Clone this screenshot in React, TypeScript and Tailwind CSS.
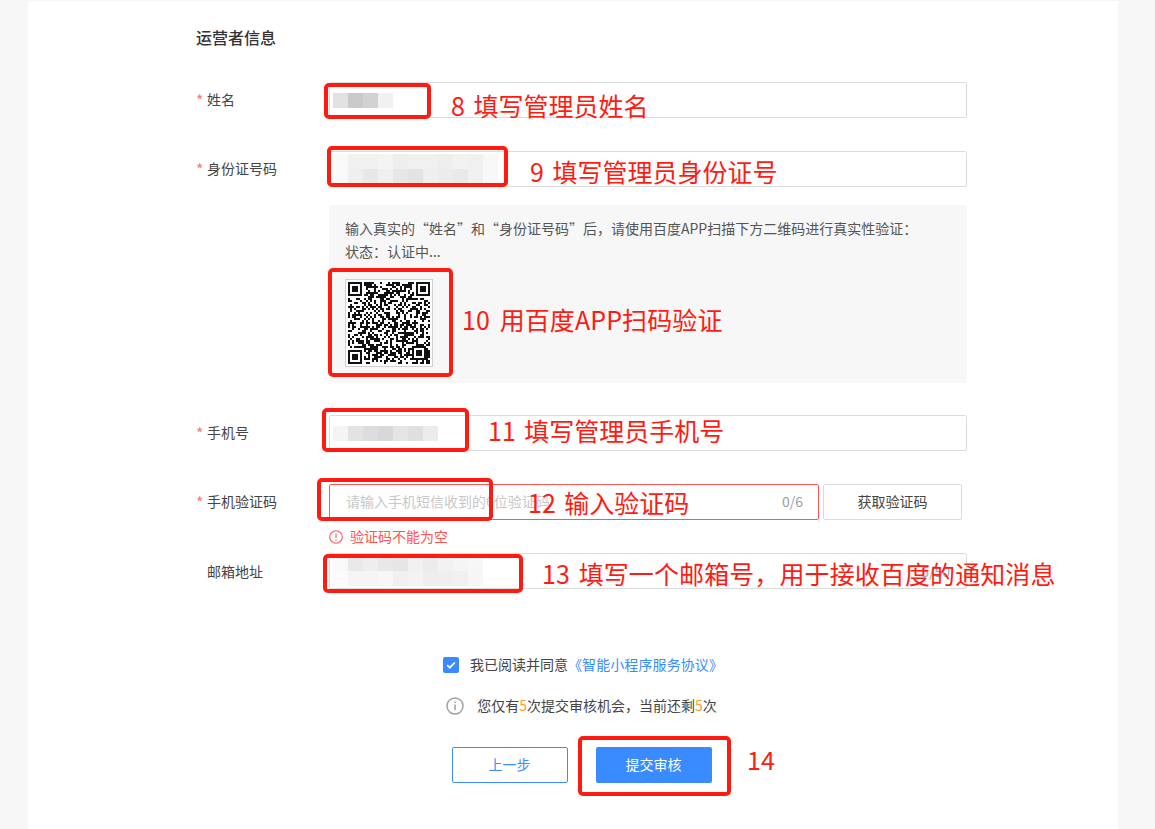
import type { ReactNode } from 'react'

const font = "font-['Noto_Sans_CJK_SC','Noto_Sans',sans-serif]"

// fake qr code, seeded so it stays the same between renders
function buildQr() {
  const size = 41
  const cells: [number, number][] = []
  let seed = 20240611
  const next = () => {
    seed = (seed * 1664525 + 1013904223) >>> 0
    return seed / 4294967296
  }
  const inFinder = (x: number, y: number) =>
    (x < 8 && y < 8) || (x > size - 9 && y < 8) || (x < 8 && y > size - 9)
  const inAlign = (x: number, y: number) => x > 31 && x < 37 && y > 31 && y < 37
  for (let y = 0; y < size; y++) {
    for (let x = 0; x < size; x++) {
      if (inFinder(x, y) || inAlign(x, y)) continue
      if (next() > 0.5) cells.push([x, y])
    }
  }
  return cells
}

const qrCells = buildQr()

function Finder({ x, y }: { x: number; y: number }) {
  return (
    <g>
      <rect x={x} y={y} width={7} height={7} fill="#111" />
      <rect x={x + 1} y={y + 1} width={5} height={5} fill="#fff" />
      <rect x={x + 2} y={y + 2} width={3} height={3} fill="#111" />
    </g>
  )
}

function QrCode() {
  return (
    <div className="w-[88px] h-[88px] border border-[#d0d0d0] bg-white p-[2px]">
      <svg viewBox="0 0 41 41" className="w-full h-full block">
        {qrCells.map(([x, y]) => (
          <rect key={`${x}-${y}`} x={x} y={y} width={1} height={1} fill="#111" />
        ))}
        <Finder x={0} y={0} />
        <Finder x={34} y={0} />
        <Finder x={0} y={34} />
        <Finder x={32} y={32} />
      </svg>
    </div>
  )
}

function Mosaic({ rows }: { rows: string[][] }) {
  return (
    <div className="flex flex-col">
      {rows.map((row, i) => (
        <div key={i} className="flex">
          {row.map((color, j) => (
            <div key={j} className="w-[15px] h-[15px]" style={{ backgroundColor: color }} />
          ))}
        </div>
      ))}
    </div>
  )
}

function Row({ label, required = true, children, className }: { label: string; required?: boolean; children: ReactNode; className?: string }) {
  return (
    <div className={`flex items-center h-9 ${className ?? ''}`}>
      <div className={`w-[133px] flex items-center text-sm text-[#444] shrink-0 ${required ? 'pb-[2px]' : ''}`}>
        <span className="w-[11px] text-base text-[#f77] leading-none pt-[2px]">{required ? '*' : ''}</span>
        <span>{label}</span>
      </div>
      {children}
    </div>
  )
}

function Field({ children }: { children?: ReactNode }) {
  return (
    <div className="w-[638px] h-9 border border-[#dcdcdc] rounded-[2px] bg-white flex items-center pl-[3px] relative">
      {children}
    </div>
  )
}

export default function App() {
  return (
    <div className={`relative h-[829px] overflow-hidden bg-[#f7f7f7] ${font}`}>
      <div className="ml-[28px] mt-px w-[1090px] h-[828px] bg-white pl-[168px]">
        <div className="w-[771px]">
          <h2 className="pt-[25px] pb-px text-base leading-[22px] font-medium text-[#333]">运营者信息</h2>

          <Row label="姓名" className="mt-[33px]">
            <Field>
              <Mosaic rows={[['#e3e2e2', '#c9caca', '#d2d2d2', '#f1f1f3']]} />
            </Field>
          </Row>

          <Row label="身份证号码" className="mt-[33px]">
            <Field>
              <Mosaic
                rows={[
                  ['#f9f9f9', '#f1f1f1', '#f1f1f1', '#f4f4f4', '#eeeeee', '#f0f0f0', '#f0f0f0', '#eeeeee', '#f2f2f2', '#f0f0f0', '#f8f8f8'],
                  ['#f9f9f9', '#efefef', '#e8e8e8', '#f0f0f0', '#e6e6e6', '#e2e3e3', '#efefef', '#ececec', '#e9e9e9', '#f0f0f0', '#f8f8f8'],
                ]}
              />
            </Field>
          </Row>

          <div className="ml-[133px] mt-[18px] w-[638px] h-[178px] bg-[#f7f7f7] rounded-[2px] pl-4 pt-[12px] text-sm leading-[23px] text-[#555]">
            <p>输入真实的“姓名”和“身份证号码”后，请使用百度APP扫描下方二维码进行真实性验证：</p>
            <p>状态：认证中...</p>
            <div className="mt-[16px]">
              <QrCode />
            </div>
          </div>

          <Row label="手机号" className="mt-[32px]">
            <Field>
              <Mosaic rows={[['#f4f4f4', '#e4e3e3', '#dcdde0', '#d8d8d8', '#e5e5e5', '#dfdfe0', '#ececec']]} />
            </Field>
          </Row>

          <Row label="手机验证码" className="mt-[33px]">
            <div className="w-[490px] h-9 border border-[#f55] rounded-[2px] bg-white flex items-center justify-between pl-[16px] pr-[15px] pb-[2px] text-sm">
              <span className="text-[#c8c8c8]">请输入手机短信收到的6位验证码</span>
              <span className="text-[#9a9ea8]">0/6</span>
            </div>
            <button className="ml-[4px] w-[139px] h-9 border border-[#dcdcdc] rounded-[2px] bg-white pb-[2px] text-sm text-[#444]">获取验证码</button>
          </Row>

          <div className="ml-[133px] h-[33px] flex items-center gap-[7px] text-sm text-[#f55]">
            <svg viewBox="0 0 14 14" className="w-[14px] h-[14px]" fill="none" stroke="#f55" strokeWidth="1.1">
              <circle cx="7" cy="7" r="6.3" />
              <path d="M7 3.5v4.4M7 9.4v1.1" />
            </svg>
            <span className="pb-[2px]">验证码不能为空</span>
          </div>

          <Row label="邮箱地址" required={false}>
            <Field>
              <span className="absolute right-[16px] text-sm text-[#a0a4ad]">5/50</span>
              <Mosaic
                rows={[
                  ['#f9f9f9', '#e9e9e9', '#eeeeee', '#e8e8e8', '#e6e6e6', '#f0f0f0', '#ececec', '#f2f2f2', '#f5f5f5', '#f7f7f7'],
                  ['#fbfbfb', '#f5f5f5', '#f5f5f5', '#f7f7f7', '#f0f0f0', '#f3f3f3', '#eeeeee', '#efefef', '#f0f0f0', '#f6f6f6'],
                ]}
              />
            </Field>
          </Row>

          <div className="mt-[65px] pl-[3px] flex items-center justify-center text-sm leading-5 text-[#444]">
            <span className="w-4 h-4 mr-[11px] bg-[#3a8bff] rounded-[2px] flex items-center justify-center">
              <svg viewBox="0 0 16 16" className="w-4 h-4" fill="none" stroke="#fff" strokeWidth="1.8">
                <path d="M4.2 8.2l2.6 2.5 5-5.2" />
              </svg>
            </span>
            <span className="pb-[2px]">我已阅读并同意</span>
            <span className="pb-[2px] tracking-[0.1px] text-[#3a8bff]">《智能小程序服务协议》</span>
          </div>

          <div className="mt-[19px] flex items-center justify-center text-sm leading-5 text-[#444]">
            <svg viewBox="0 0 18 18" className="w-[18px] h-[18px] mr-[13px]" fill="none" stroke="#a0a0a0" strokeWidth="1.5">
              <circle cx="9" cy="9" r="8" />
              <path d="M9 7.6v5.4M9 4.6v1.5" />
            </svg>
            <span className="pb-[2px]">
              您仅有<span className="text-[#ff9c33]">5</span>次提交审核机会，当前还剩<span className="text-[#ff9c33]">5</span>次
            </span>
          </div>

          <div className="mt-[30px] flex justify-center gap-[28px]">
            <button className="w-[116px] h-9 border border-[#3a8bff] rounded-[2px] bg-white pb-[2px] text-sm text-[#3a8bff]">上一步</button>
            <button className="w-[116px] h-9 rounded-[2px] bg-[#3a8bff] pb-[2px] text-sm text-white">提交审核</button>
          </div>
        </div>
      </div>

      {/* red markup drawn on top of the screenshot */}
      <div className="absolute left-[324px] top-[83px] w-[107px] h-[36px] border-4 border-[#ff1a12] rounded-[5px]" />
      <div className="absolute left-[327px] top-[146px] w-[181px] h-[41px] border-4 border-[#ff1a12] rounded-[5px]" />
      <div className="absolute left-[328px] top-[268px] w-[125px] h-[109px] border-4 border-[#ff1a12] rounded-[5px]" />
      <div className="absolute left-[322px] top-[408px] w-[147px] h-[44px] border-4 border-[#ff1a12] rounded-[5px]" />
      <div className="absolute left-[317px] top-[478px] w-[176px] h-[43px] border-4 border-[#ff1a12] rounded-[5px]" />
      <div className="absolute left-[323px] top-[554px] w-[200px] h-[39px] border-4 border-[#ff1a12] rounded-[5px]" />
      <div className="absolute left-[578px] top-[736px] w-[153px] h-[60px] border-4 border-[#ff1a12] rounded-[5px]" />

      <span className="absolute left-[451px] top-[88px] text-[25px] leading-[34px] [word-spacing:3px] text-[#ff1a12]">8 填写管理员姓名</span>
      <span className="absolute left-[530px] top-[154px] text-[25px] leading-[34px] [word-spacing:3px] text-[#ff1a12]">9 填写管理员身份证号</span>
      <span className="absolute left-[462px] top-[302px] text-[25px] leading-[34px] [word-spacing:4px] tracking-[0.1px] text-[#ff1a12]">10 用百度APP扫码验证</span>
      <span className="absolute left-[488px] top-[413px] text-[25px] leading-[34px] [word-spacing:3px] text-[#ff1a12]">11 填写管理员手机号</span>
      <span className="absolute left-[528px] top-[485px] text-[25px] leading-[34px] [word-spacing:3px] text-[#ff1a12]">12 输入验证码</span>
      <span className="absolute left-[542px] top-[556px] text-[25px] leading-[34px] [word-spacing:3px] tracking-[0.1px] text-[#ff1a12]">13 填写一个邮箱号，用于接收百度的通知消息</span>
      <span className="absolute left-[747px] top-[742px] text-[25px] leading-[34px] text-[#ff1a12]">14</span>
    </div>
  )
}
